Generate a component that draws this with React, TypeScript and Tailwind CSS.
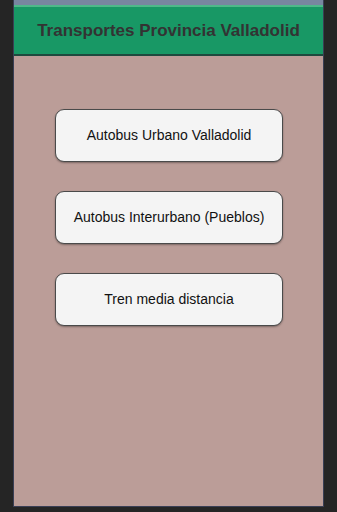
const options = [
  'Autobus Urbano Valladolid',
  'Autobus Interurbano (Pueblos)',
  'Tren media distancia',
]

export default function App() {
  return (
    <div className="flex h-[512px] w-[337px] bg-[#252525] font-['Liberation_Sans',Arial,sans-serif]">
      <div className="ml-[13px] flex h-[507px] w-[311px] flex-col border-x border-b border-[#3a3f55] bg-[#bb9d98]">
        <div className="h-[5px] bg-[#7886a0]" />
        <header className="flex h-[51px] items-center justify-center border-t-2 border-b-2 border-t-[#4fb88a] border-b-[#1d4a3e] bg-[#189865]">
          <h1 className="text-[17px] font-bold text-[#333333]">Transportes Provincia Valladolid</h1>
        </header>
        <div className="flex flex-col items-center gap-[29px] pt-[53px]">
          {options.map((label) => (
            <button
              key={label}
              className="ml-[1px] h-[53px] w-[228px] rounded-[9px] border border-[#4a4a4a] bg-[#f4f4f4] text-[14px] text-[#111] shadow-[0_1px_2px_rgba(0,0,0,0.35)]"
            >
              {label}
            </button>
          ))}
        </div>
      </div>
    </div>
  )
}
